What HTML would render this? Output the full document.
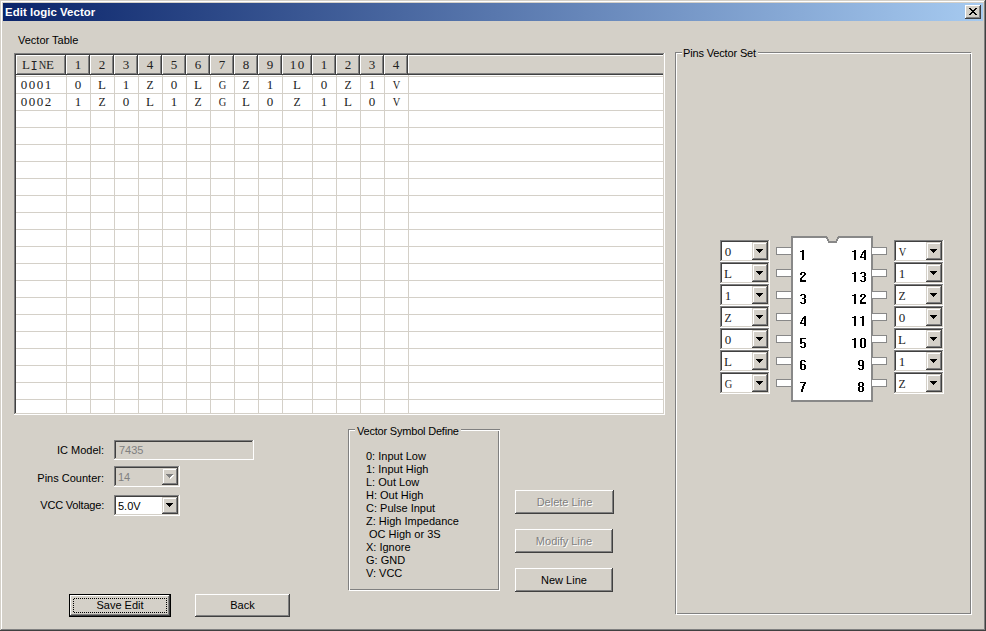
<!DOCTYPE html><html><head><meta charset="utf-8"><style>
*{margin:0;padding:0}
html,body{width:986px;height:631px;overflow:hidden;background:#d4d0c8}
body{position:relative;font-family:"Liberation Sans",sans-serif;font-size:11px;color:#000}
div,span{position:absolute}
span{white-space:pre;line-height:13px}
.s{padding-top:1px}
.s{font-size:11px}
.m{font-family:"Liberation Mono",monospace;font-size:12.6px;line-height:15px;letter-spacing:0.4px;color:#222}
.b{font-weight:bold}
.g{color:#808080}
.cs{font-family:"Liberation Serif",serif;font-size:13px;line-height:14px;width:8px;text-align:center;color:#222}
.ic{font-weight:bold;font-size:14px;line-height:16px}
</style></head><body>
<div style="left:0px;top:0px;width:986px;height:1px;background:#d4d0c8;"></div>
<div style="left:0px;top:0px;width:1px;height:631px;background:#d4d0c8;"></div>
<div style="left:0px;top:630px;width:986px;height:1px;background:#404040;"></div>
<div style="left:985px;top:0px;width:1px;height:631px;background:#404040;"></div>
<div style="left:1px;top:1px;width:984px;height:1px;background:#fff;"></div>
<div style="left:1px;top:1px;width:1px;height:629px;background:#fff;"></div>
<div style="left:1px;top:629px;width:984px;height:1px;background:#808080;"></div>
<div style="left:984px;top:1px;width:1px;height:629px;background:#808080;"></div>
<div style="left:3px;top:3px;width:980px;height:18px;background:linear-gradient(to right,#0a246a,#a6caf0);"></div>
<span class="b" style="left:5px;top:6px;color:#fff;font-size:11.4px;letter-spacing:0.06px">Edit logic Vector</span>
<div style="left:965px;top:5px;width:16px;height:14px;background:#d4d0c8;"></div>
<div style="left:965px;top:5px;width:16px;height:1px;background:#fff;"></div>
<div style="left:965px;top:5px;width:1px;height:14px;background:#fff;"></div>
<div style="left:965px;top:18px;width:16px;height:1px;background:#404040;"></div>
<div style="left:980px;top:5px;width:1px;height:14px;background:#404040;"></div>
<div style="left:966px;top:17px;width:14px;height:1px;background:#808080;"></div>
<div style="left:979px;top:6px;width:1px;height:12px;background:#808080;"></div>
<div style="left:969px;top:8px;width:1px;height:1px;background:#000;"></div>
<div style="left:970px;top:8px;width:1px;height:1px;background:#000;"></div>
<div style="left:975px;top:8px;width:1px;height:1px;background:#000;"></div>
<div style="left:976px;top:8px;width:1px;height:1px;background:#000;"></div>
<div style="left:970px;top:9px;width:1px;height:1px;background:#000;"></div>
<div style="left:971px;top:9px;width:1px;height:1px;background:#000;"></div>
<div style="left:974px;top:9px;width:1px;height:1px;background:#000;"></div>
<div style="left:975px;top:9px;width:1px;height:1px;background:#000;"></div>
<div style="left:971px;top:10px;width:1px;height:1px;background:#000;"></div>
<div style="left:972px;top:10px;width:1px;height:1px;background:#000;"></div>
<div style="left:973px;top:10px;width:1px;height:1px;background:#000;"></div>
<div style="left:974px;top:10px;width:1px;height:1px;background:#000;"></div>
<div style="left:972px;top:11px;width:1px;height:1px;background:#000;"></div>
<div style="left:973px;top:11px;width:1px;height:1px;background:#000;"></div>
<div style="left:971px;top:12px;width:1px;height:1px;background:#000;"></div>
<div style="left:972px;top:12px;width:1px;height:1px;background:#000;"></div>
<div style="left:973px;top:12px;width:1px;height:1px;background:#000;"></div>
<div style="left:974px;top:12px;width:1px;height:1px;background:#000;"></div>
<div style="left:970px;top:13px;width:1px;height:1px;background:#000;"></div>
<div style="left:971px;top:13px;width:1px;height:1px;background:#000;"></div>
<div style="left:974px;top:13px;width:1px;height:1px;background:#000;"></div>
<div style="left:975px;top:13px;width:1px;height:1px;background:#000;"></div>
<div style="left:969px;top:14px;width:1px;height:1px;background:#000;"></div>
<div style="left:970px;top:14px;width:1px;height:1px;background:#000;"></div>
<div style="left:975px;top:14px;width:1px;height:1px;background:#000;"></div>
<div style="left:976px;top:14px;width:1px;height:1px;background:#000;"></div>
<span class="s" style="left:18px;top:33px;">Vector Table</span>
<div style="left:14px;top:53px;width:651px;height:362px;background:#fff;"></div>
<div style="left:14px;top:53px;width:651px;height:1px;background:#808080;"></div>
<div style="left:14px;top:53px;width:1px;height:362px;background:#808080;"></div>
<div style="left:14px;top:414px;width:651px;height:1px;background:#fff;"></div>
<div style="left:664px;top:53px;width:1px;height:362px;background:#fff;"></div>
<div style="left:15px;top:54px;width:649px;height:1px;background:#404040;"></div>
<div style="left:15px;top:54px;width:1px;height:360px;background:#404040;"></div>
<div style="left:15px;top:413px;width:649px;height:1px;background:#d4d0c8;"></div>
<div style="left:663px;top:54px;width:1px;height:360px;background:#d4d0c8;"></div>
<div style="left:16px;top:76px;width:647px;height:1px;background:#d4d0c8;"></div>
<div style="left:16px;top:93px;width:647px;height:1px;background:#d4d0c8;"></div>
<div style="left:16px;top:110px;width:647px;height:1px;background:#d4d0c8;"></div>
<div style="left:16px;top:127px;width:647px;height:1px;background:#d4d0c8;"></div>
<div style="left:16px;top:144px;width:647px;height:1px;background:#d4d0c8;"></div>
<div style="left:16px;top:161px;width:647px;height:1px;background:#d4d0c8;"></div>
<div style="left:16px;top:178px;width:647px;height:1px;background:#d4d0c8;"></div>
<div style="left:16px;top:195px;width:647px;height:1px;background:#d4d0c8;"></div>
<div style="left:16px;top:212px;width:647px;height:1px;background:#d4d0c8;"></div>
<div style="left:16px;top:229px;width:647px;height:1px;background:#d4d0c8;"></div>
<div style="left:16px;top:246px;width:647px;height:1px;background:#d4d0c8;"></div>
<div style="left:16px;top:263px;width:647px;height:1px;background:#d4d0c8;"></div>
<div style="left:16px;top:280px;width:647px;height:1px;background:#d4d0c8;"></div>
<div style="left:16px;top:297px;width:647px;height:1px;background:#d4d0c8;"></div>
<div style="left:16px;top:314px;width:647px;height:1px;background:#d4d0c8;"></div>
<div style="left:16px;top:331px;width:647px;height:1px;background:#d4d0c8;"></div>
<div style="left:16px;top:348px;width:647px;height:1px;background:#d4d0c8;"></div>
<div style="left:16px;top:365px;width:647px;height:1px;background:#d4d0c8;"></div>
<div style="left:16px;top:382px;width:647px;height:1px;background:#d4d0c8;"></div>
<div style="left:16px;top:399px;width:647px;height:1px;background:#d4d0c8;"></div>
<div style="left:66px;top:75px;width:1px;height:338px;background:#d4d0c8;"></div>
<div style="left:90px;top:75px;width:1px;height:338px;background:#d4d0c8;"></div>
<div style="left:114px;top:75px;width:1px;height:338px;background:#d4d0c8;"></div>
<div style="left:138px;top:75px;width:1px;height:338px;background:#d4d0c8;"></div>
<div style="left:162px;top:75px;width:1px;height:338px;background:#d4d0c8;"></div>
<div style="left:186px;top:75px;width:1px;height:338px;background:#d4d0c8;"></div>
<div style="left:210px;top:75px;width:1px;height:338px;background:#d4d0c8;"></div>
<div style="left:234px;top:75px;width:1px;height:338px;background:#d4d0c8;"></div>
<div style="left:258px;top:75px;width:1px;height:338px;background:#d4d0c8;"></div>
<div style="left:282px;top:75px;width:1px;height:338px;background:#d4d0c8;"></div>
<div style="left:312px;top:75px;width:1px;height:338px;background:#d4d0c8;"></div>
<div style="left:336px;top:75px;width:1px;height:338px;background:#d4d0c8;"></div>
<div style="left:360px;top:75px;width:1px;height:338px;background:#d4d0c8;"></div>
<div style="left:384px;top:75px;width:1px;height:338px;background:#d4d0c8;"></div>
<div style="left:408px;top:75px;width:1px;height:338px;background:#d4d0c8;"></div>
<div style="left:16px;top:55px;width:50px;height:20px;background:#d4d0c8;"></div>
<div style="left:16px;top:55px;width:50px;height:1px;background:#fff;"></div>
<div style="left:16px;top:55px;width:1px;height:20px;background:#fff;"></div>
<div style="left:16px;top:74px;width:50px;height:1px;background:#404040;"></div>
<div style="left:65px;top:55px;width:1px;height:20px;background:#404040;"></div>
<div style="left:17px;top:73px;width:48px;height:1px;background:#808080;"></div>
<div style="left:64px;top:56px;width:1px;height:18px;background:#808080;"></div>
<span class="cs" style="left:22px;top:58px;">L</span>
<span class="cs" style="left:30px;top:60px;font-family:'Liberation Mono',monospace;font-size:12px;">I</span>
<span class="cs" style="left:38px;top:58px;transform:scaleX(0.8);">N</span>
<span class="cs" style="left:46px;top:58px;">E</span>
<div style="left:66px;top:55px;width:24px;height:20px;background:#d4d0c8;"></div>
<div style="left:66px;top:55px;width:24px;height:1px;background:#fff;"></div>
<div style="left:66px;top:55px;width:1px;height:20px;background:#fff;"></div>
<div style="left:66px;top:74px;width:24px;height:1px;background:#404040;"></div>
<div style="left:89px;top:55px;width:1px;height:20px;background:#404040;"></div>
<div style="left:67px;top:73px;width:22px;height:1px;background:#808080;"></div>
<div style="left:88px;top:56px;width:1px;height:18px;background:#808080;"></div>
<span class="cs" style="left:74px;top:58px;">1</span>
<div style="left:90px;top:55px;width:24px;height:20px;background:#d4d0c8;"></div>
<div style="left:90px;top:55px;width:24px;height:1px;background:#fff;"></div>
<div style="left:90px;top:55px;width:1px;height:20px;background:#fff;"></div>
<div style="left:90px;top:74px;width:24px;height:1px;background:#404040;"></div>
<div style="left:113px;top:55px;width:1px;height:20px;background:#404040;"></div>
<div style="left:91px;top:73px;width:22px;height:1px;background:#808080;"></div>
<div style="left:112px;top:56px;width:1px;height:18px;background:#808080;"></div>
<span class="cs" style="left:98px;top:58px;">2</span>
<div style="left:114px;top:55px;width:24px;height:20px;background:#d4d0c8;"></div>
<div style="left:114px;top:55px;width:24px;height:1px;background:#fff;"></div>
<div style="left:114px;top:55px;width:1px;height:20px;background:#fff;"></div>
<div style="left:114px;top:74px;width:24px;height:1px;background:#404040;"></div>
<div style="left:137px;top:55px;width:1px;height:20px;background:#404040;"></div>
<div style="left:115px;top:73px;width:22px;height:1px;background:#808080;"></div>
<div style="left:136px;top:56px;width:1px;height:18px;background:#808080;"></div>
<span class="cs" style="left:122px;top:58px;">3</span>
<div style="left:138px;top:55px;width:24px;height:20px;background:#d4d0c8;"></div>
<div style="left:138px;top:55px;width:24px;height:1px;background:#fff;"></div>
<div style="left:138px;top:55px;width:1px;height:20px;background:#fff;"></div>
<div style="left:138px;top:74px;width:24px;height:1px;background:#404040;"></div>
<div style="left:161px;top:55px;width:1px;height:20px;background:#404040;"></div>
<div style="left:139px;top:73px;width:22px;height:1px;background:#808080;"></div>
<div style="left:160px;top:56px;width:1px;height:18px;background:#808080;"></div>
<span class="cs" style="left:146px;top:58px;">4</span>
<div style="left:162px;top:55px;width:24px;height:20px;background:#d4d0c8;"></div>
<div style="left:162px;top:55px;width:24px;height:1px;background:#fff;"></div>
<div style="left:162px;top:55px;width:1px;height:20px;background:#fff;"></div>
<div style="left:162px;top:74px;width:24px;height:1px;background:#404040;"></div>
<div style="left:185px;top:55px;width:1px;height:20px;background:#404040;"></div>
<div style="left:163px;top:73px;width:22px;height:1px;background:#808080;"></div>
<div style="left:184px;top:56px;width:1px;height:18px;background:#808080;"></div>
<span class="cs" style="left:170px;top:58px;">5</span>
<div style="left:186px;top:55px;width:24px;height:20px;background:#d4d0c8;"></div>
<div style="left:186px;top:55px;width:24px;height:1px;background:#fff;"></div>
<div style="left:186px;top:55px;width:1px;height:20px;background:#fff;"></div>
<div style="left:186px;top:74px;width:24px;height:1px;background:#404040;"></div>
<div style="left:209px;top:55px;width:1px;height:20px;background:#404040;"></div>
<div style="left:187px;top:73px;width:22px;height:1px;background:#808080;"></div>
<div style="left:208px;top:56px;width:1px;height:18px;background:#808080;"></div>
<span class="cs" style="left:194px;top:58px;">6</span>
<div style="left:210px;top:55px;width:24px;height:20px;background:#d4d0c8;"></div>
<div style="left:210px;top:55px;width:24px;height:1px;background:#fff;"></div>
<div style="left:210px;top:55px;width:1px;height:20px;background:#fff;"></div>
<div style="left:210px;top:74px;width:24px;height:1px;background:#404040;"></div>
<div style="left:233px;top:55px;width:1px;height:20px;background:#404040;"></div>
<div style="left:211px;top:73px;width:22px;height:1px;background:#808080;"></div>
<div style="left:232px;top:56px;width:1px;height:18px;background:#808080;"></div>
<span class="cs" style="left:218px;top:58px;">7</span>
<div style="left:234px;top:55px;width:24px;height:20px;background:#d4d0c8;"></div>
<div style="left:234px;top:55px;width:24px;height:1px;background:#fff;"></div>
<div style="left:234px;top:55px;width:1px;height:20px;background:#fff;"></div>
<div style="left:234px;top:74px;width:24px;height:1px;background:#404040;"></div>
<div style="left:257px;top:55px;width:1px;height:20px;background:#404040;"></div>
<div style="left:235px;top:73px;width:22px;height:1px;background:#808080;"></div>
<div style="left:256px;top:56px;width:1px;height:18px;background:#808080;"></div>
<span class="cs" style="left:242px;top:58px;">8</span>
<div style="left:258px;top:55px;width:24px;height:20px;background:#d4d0c8;"></div>
<div style="left:258px;top:55px;width:24px;height:1px;background:#fff;"></div>
<div style="left:258px;top:55px;width:1px;height:20px;background:#fff;"></div>
<div style="left:258px;top:74px;width:24px;height:1px;background:#404040;"></div>
<div style="left:281px;top:55px;width:1px;height:20px;background:#404040;"></div>
<div style="left:259px;top:73px;width:22px;height:1px;background:#808080;"></div>
<div style="left:280px;top:56px;width:1px;height:18px;background:#808080;"></div>
<span class="cs" style="left:266px;top:58px;">9</span>
<div style="left:282px;top:55px;width:30px;height:20px;background:#d4d0c8;"></div>
<div style="left:282px;top:55px;width:30px;height:1px;background:#fff;"></div>
<div style="left:282px;top:55px;width:1px;height:20px;background:#fff;"></div>
<div style="left:282px;top:74px;width:30px;height:1px;background:#404040;"></div>
<div style="left:311px;top:55px;width:1px;height:20px;background:#404040;"></div>
<div style="left:283px;top:73px;width:28px;height:1px;background:#808080;"></div>
<div style="left:310px;top:56px;width:1px;height:18px;background:#808080;"></div>
<span class="cs" style="left:289px;top:58px;">1</span>
<span class="cs" style="left:297px;top:58px;">0</span>
<div style="left:312px;top:55px;width:24px;height:20px;background:#d4d0c8;"></div>
<div style="left:312px;top:55px;width:24px;height:1px;background:#fff;"></div>
<div style="left:312px;top:55px;width:1px;height:20px;background:#fff;"></div>
<div style="left:312px;top:74px;width:24px;height:1px;background:#404040;"></div>
<div style="left:335px;top:55px;width:1px;height:20px;background:#404040;"></div>
<div style="left:313px;top:73px;width:22px;height:1px;background:#808080;"></div>
<div style="left:334px;top:56px;width:1px;height:18px;background:#808080;"></div>
<span class="cs" style="left:320px;top:58px;">1</span>
<div style="left:336px;top:55px;width:24px;height:20px;background:#d4d0c8;"></div>
<div style="left:336px;top:55px;width:24px;height:1px;background:#fff;"></div>
<div style="left:336px;top:55px;width:1px;height:20px;background:#fff;"></div>
<div style="left:336px;top:74px;width:24px;height:1px;background:#404040;"></div>
<div style="left:359px;top:55px;width:1px;height:20px;background:#404040;"></div>
<div style="left:337px;top:73px;width:22px;height:1px;background:#808080;"></div>
<div style="left:358px;top:56px;width:1px;height:18px;background:#808080;"></div>
<span class="cs" style="left:344px;top:58px;">2</span>
<div style="left:360px;top:55px;width:24px;height:20px;background:#d4d0c8;"></div>
<div style="left:360px;top:55px;width:24px;height:1px;background:#fff;"></div>
<div style="left:360px;top:55px;width:1px;height:20px;background:#fff;"></div>
<div style="left:360px;top:74px;width:24px;height:1px;background:#404040;"></div>
<div style="left:383px;top:55px;width:1px;height:20px;background:#404040;"></div>
<div style="left:361px;top:73px;width:22px;height:1px;background:#808080;"></div>
<div style="left:382px;top:56px;width:1px;height:18px;background:#808080;"></div>
<span class="cs" style="left:368px;top:58px;">3</span>
<div style="left:384px;top:55px;width:24px;height:20px;background:#d4d0c8;"></div>
<div style="left:384px;top:55px;width:24px;height:1px;background:#fff;"></div>
<div style="left:384px;top:55px;width:1px;height:20px;background:#fff;"></div>
<div style="left:384px;top:74px;width:24px;height:1px;background:#404040;"></div>
<div style="left:407px;top:55px;width:1px;height:20px;background:#404040;"></div>
<div style="left:385px;top:73px;width:22px;height:1px;background:#808080;"></div>
<div style="left:406px;top:56px;width:1px;height:18px;background:#808080;"></div>
<span class="cs" style="left:392px;top:58px;">4</span>
<div style="left:408px;top:55px;width:255px;height:20px;background:#d4d0c8;"></div>
<div style="left:408px;top:55px;width:255px;height:1px;background:#fff;"></div>
<div style="left:408px;top:55px;width:1px;height:20px;background:#fff;"></div>
<div style="left:408px;top:73px;width:255px;height:1px;background:#808080;"></div>
<div style="left:408px;top:74px;width:255px;height:1px;background:#404040;"></div>
<span class="cs" style="left:20px;top:78px;">0</span>
<span class="cs" style="left:28px;top:78px;">0</span>
<span class="cs" style="left:36px;top:78px;">0</span>
<span class="cs" style="left:44px;top:78px;">1</span>
<span class="cs" style="left:74px;top:78px;">0</span>
<span class="cs" style="left:98px;top:78px;">L</span>
<span class="cs" style="left:122px;top:78px;">1</span>
<span class="cs" style="left:146px;top:78px;transform:scaleX(0.9);">Z</span>
<span class="cs" style="left:170px;top:78px;">0</span>
<span class="cs" style="left:194px;top:78px;">L</span>
<span class="cs" style="left:218px;top:78px;transform:scaleX(0.8);">G</span>
<span class="cs" style="left:242px;top:78px;transform:scaleX(0.9);">Z</span>
<span class="cs" style="left:266px;top:78px;">1</span>
<span class="cs" style="left:293px;top:78px;">L</span>
<span class="cs" style="left:320px;top:78px;">0</span>
<span class="cs" style="left:344px;top:78px;transform:scaleX(0.9);">Z</span>
<span class="cs" style="left:368px;top:78px;">1</span>
<span class="cs" style="left:392px;top:78px;transform:scaleX(0.8);">V</span>
<span class="cs" style="left:20px;top:95px;">0</span>
<span class="cs" style="left:28px;top:95px;">0</span>
<span class="cs" style="left:36px;top:95px;">0</span>
<span class="cs" style="left:44px;top:95px;">2</span>
<span class="cs" style="left:74px;top:95px;">1</span>
<span class="cs" style="left:98px;top:95px;transform:scaleX(0.9);">Z</span>
<span class="cs" style="left:122px;top:95px;">0</span>
<span class="cs" style="left:146px;top:95px;">L</span>
<span class="cs" style="left:170px;top:95px;">1</span>
<span class="cs" style="left:194px;top:95px;transform:scaleX(0.9);">Z</span>
<span class="cs" style="left:218px;top:95px;transform:scaleX(0.8);">G</span>
<span class="cs" style="left:242px;top:95px;">L</span>
<span class="cs" style="left:266px;top:95px;">0</span>
<span class="cs" style="left:293px;top:95px;transform:scaleX(0.9);">Z</span>
<span class="cs" style="left:320px;top:95px;">1</span>
<span class="cs" style="left:344px;top:95px;">L</span>
<span class="cs" style="left:368px;top:95px;">0</span>
<span class="cs" style="left:392px;top:95px;transform:scaleX(0.8);">V</span>
<span class="s" style="left:0px;top:443px;width:104px;text-align:right">IC Model:</span>
<span class="s" style="left:0px;top:471px;width:104px;text-align:right">Pins Counter:</span>
<span class="s" style="left:0px;top:498px;width:104px;text-align:right;letter-spacing:-0.2px">VCC Voltage:</span>
<div style="left:114px;top:440px;width:140px;height:20px;background:#d4d0c8;"></div>
<div style="left:114px;top:440px;width:140px;height:1px;background:#808080;"></div>
<div style="left:114px;top:440px;width:1px;height:20px;background:#808080;"></div>
<div style="left:114px;top:459px;width:140px;height:1px;background:#fff;"></div>
<div style="left:253px;top:440px;width:1px;height:20px;background:#fff;"></div>
<div style="left:115px;top:441px;width:138px;height:1px;background:#404040;"></div>
<div style="left:115px;top:441px;width:1px;height:18px;background:#404040;"></div>
<div style="left:115px;top:458px;width:138px;height:1px;background:#d4d0c8;"></div>
<div style="left:252px;top:441px;width:1px;height:18px;background:#d4d0c8;"></div>
<span class="s g" style="left:119px;top:443px;">7435</span>
<div style="left:114px;top:466px;width:66px;height:21px;background:#d4d0c8;"></div>
<div style="left:114px;top:466px;width:66px;height:1px;background:#808080;"></div>
<div style="left:114px;top:466px;width:1px;height:21px;background:#808080;"></div>
<div style="left:114px;top:486px;width:66px;height:1px;background:#fff;"></div>
<div style="left:179px;top:466px;width:1px;height:21px;background:#fff;"></div>
<div style="left:115px;top:467px;width:64px;height:1px;background:#404040;"></div>
<div style="left:115px;top:467px;width:1px;height:19px;background:#404040;"></div>
<div style="left:115px;top:485px;width:64px;height:1px;background:#d4d0c8;"></div>
<div style="left:178px;top:467px;width:1px;height:19px;background:#d4d0c8;"></div>
<div style="left:162px;top:468px;width:16px;height:17px;background:#d4d0c8;"></div>
<div style="left:162px;top:468px;width:16px;height:1px;background:#d4d0c8;"></div>
<div style="left:162px;top:468px;width:1px;height:17px;background:#d4d0c8;"></div>
<div style="left:162px;top:484px;width:16px;height:1px;background:#404040;"></div>
<div style="left:177px;top:468px;width:1px;height:17px;background:#404040;"></div>
<div style="left:163px;top:469px;width:14px;height:1px;background:#fff;"></div>
<div style="left:163px;top:469px;width:1px;height:15px;background:#fff;"></div>
<div style="left:163px;top:483px;width:14px;height:1px;background:#808080;"></div>
<div style="left:176px;top:469px;width:1px;height:15px;background:#808080;"></div>
<div style="left:167px;top:475px;width:7px;height:1px;background:#fff;"></div>
<div style="left:168px;top:476px;width:5px;height:1px;background:#fff;"></div>
<div style="left:169px;top:477px;width:3px;height:1px;background:#fff;"></div>
<div style="left:170px;top:478px;width:1px;height:1px;background:#fff;"></div>
<div style="left:166px;top:474px;width:7px;height:1px;background:#808080;"></div>
<div style="left:167px;top:475px;width:5px;height:1px;background:#808080;"></div>
<div style="left:168px;top:476px;width:3px;height:1px;background:#808080;"></div>
<div style="left:169px;top:477px;width:1px;height:1px;background:#808080;"></div>
<span class="s g" style="left:118px;top:470px;">14</span>
<div style="left:114px;top:495px;width:66px;height:21px;background:#fff;"></div>
<div style="left:114px;top:495px;width:66px;height:1px;background:#808080;"></div>
<div style="left:114px;top:495px;width:1px;height:21px;background:#808080;"></div>
<div style="left:114px;top:515px;width:66px;height:1px;background:#fff;"></div>
<div style="left:179px;top:495px;width:1px;height:21px;background:#fff;"></div>
<div style="left:115px;top:496px;width:64px;height:1px;background:#404040;"></div>
<div style="left:115px;top:496px;width:1px;height:19px;background:#404040;"></div>
<div style="left:115px;top:514px;width:64px;height:1px;background:#d4d0c8;"></div>
<div style="left:178px;top:496px;width:1px;height:19px;background:#d4d0c8;"></div>
<div style="left:162px;top:497px;width:16px;height:17px;background:#d4d0c8;"></div>
<div style="left:162px;top:497px;width:16px;height:1px;background:#d4d0c8;"></div>
<div style="left:162px;top:497px;width:1px;height:17px;background:#d4d0c8;"></div>
<div style="left:162px;top:513px;width:16px;height:1px;background:#404040;"></div>
<div style="left:177px;top:497px;width:1px;height:17px;background:#404040;"></div>
<div style="left:163px;top:498px;width:14px;height:1px;background:#fff;"></div>
<div style="left:163px;top:498px;width:1px;height:15px;background:#fff;"></div>
<div style="left:163px;top:512px;width:14px;height:1px;background:#808080;"></div>
<div style="left:176px;top:498px;width:1px;height:15px;background:#808080;"></div>
<div style="left:166px;top:503px;width:7px;height:1px;background:#000;"></div>
<div style="left:167px;top:504px;width:5px;height:1px;background:#000;"></div>
<div style="left:168px;top:505px;width:3px;height:1px;background:#000;"></div>
<div style="left:169px;top:506px;width:1px;height:1px;background:#000;"></div>
<span class="s" style="left:118px;top:499px;">5.0V</span>
<div style="left:69px;top:594px;width:102px;height:23px;background:#000;"></div>
<div style="left:70px;top:595px;width:100px;height:21px;background:#d4d0c8;"></div>
<div style="left:70px;top:595px;width:100px;height:1px;background:#fff;"></div>
<div style="left:70px;top:595px;width:1px;height:21px;background:#fff;"></div>
<div style="left:70px;top:615px;width:100px;height:1px;background:#404040;"></div>
<div style="left:169px;top:595px;width:1px;height:21px;background:#404040;"></div>
<div style="left:71px;top:614px;width:98px;height:1px;background:#808080;"></div>
<div style="left:168px;top:596px;width:1px;height:19px;background:#808080;"></div>
<span class="s" style="left:69px;top:598px;width:102px;text-align:center">Save Edit</span>
<div style="left:195px;top:594px;width:95px;height:23px;background:#d4d0c8;"></div>
<div style="left:195px;top:594px;width:95px;height:1px;background:#fff;"></div>
<div style="left:195px;top:594px;width:1px;height:23px;background:#fff;"></div>
<div style="left:195px;top:616px;width:95px;height:1px;background:#404040;"></div>
<div style="left:289px;top:594px;width:1px;height:23px;background:#404040;"></div>
<div style="left:196px;top:615px;width:93px;height:1px;background:#808080;"></div>
<div style="left:288px;top:595px;width:1px;height:21px;background:#808080;"></div>
<span class="s" style="left:195px;top:598px;width:95px;text-align:center">Back</span>
<div style="left:348px;top:429px;width:151px;height:1px;background:#808080;"></div>
<div style="left:348px;top:429px;width:1px;height:161px;background:#808080;"></div>
<div style="left:348px;top:589px;width:151px;height:1px;background:#808080;"></div>
<div style="left:498px;top:429px;width:1px;height:161px;background:#808080;"></div>
<div style="left:349px;top:430px;width:151px;height:1px;background:#fff;"></div>
<div style="left:349px;top:430px;width:1px;height:161px;background:#fff;"></div>
<div style="left:349px;top:590px;width:151px;height:1px;background:#fff;"></div>
<div style="left:499px;top:430px;width:1px;height:161px;background:#fff;"></div>
<div style="left:348px;top:429px;width:152px;height:1px;background:#808080;"></div>
<div style="left:355px;top:422px;width:106px;height:14px;background:#d4d0c8;"></div>
<span class="s" style="left:357px;top:424px;letter-spacing:-0.2px">Vector Symbol Define</span>
<span class="s" style="left:366px;top:449px;">0: Input Low</span>
<span class="s" style="left:366px;top:462px;">1: Input High</span>
<span class="s" style="left:366px;top:475px;">L: Out Low</span>
<span class="s" style="left:366px;top:488px;">H: Out High</span>
<span class="s" style="left:366px;top:501px;">C: Pulse Input</span>
<span class="s" style="left:366px;top:514px;">Z: High Impedance</span>
<span class="s" style="left:366px;top:527px;"> OC High or 3S</span>
<span class="s" style="left:366px;top:540px;">X: Ignore</span>
<span class="s" style="left:366px;top:553px;">G: GND</span>
<span class="s" style="left:366px;top:566px;">V: VCC</span>
<div style="left:515px;top:490px;width:99px;height:24px;background:#d4d0c8;"></div>
<div style="left:515px;top:490px;width:99px;height:1px;background:#fff;"></div>
<div style="left:515px;top:490px;width:1px;height:24px;background:#fff;"></div>
<div style="left:515px;top:513px;width:99px;height:1px;background:#404040;"></div>
<div style="left:613px;top:490px;width:1px;height:24px;background:#404040;"></div>
<div style="left:516px;top:512px;width:97px;height:1px;background:#808080;"></div>
<div style="left:612px;top:491px;width:1px;height:22px;background:#808080;"></div>
<span class="s" style="left:516px;top:496px;width:99px;text-align:center;color:#fff">Delete Line</span>
<span class="s" style="left:515px;top:495px;width:99px;text-align:center;color:#808080">Delete Line</span>
<div style="left:515px;top:529px;width:98px;height:24px;background:#d4d0c8;"></div>
<div style="left:515px;top:529px;width:98px;height:1px;background:#fff;"></div>
<div style="left:515px;top:529px;width:1px;height:24px;background:#fff;"></div>
<div style="left:515px;top:552px;width:98px;height:1px;background:#404040;"></div>
<div style="left:612px;top:529px;width:1px;height:24px;background:#404040;"></div>
<div style="left:516px;top:551px;width:96px;height:1px;background:#808080;"></div>
<div style="left:611px;top:530px;width:1px;height:22px;background:#808080;"></div>
<span class="s" style="left:516px;top:535px;width:98px;text-align:center;color:#fff">Modify Line</span>
<span class="s" style="left:515px;top:534px;width:98px;text-align:center;color:#808080">Modify Line</span>
<div style="left:515px;top:568px;width:98px;height:24px;background:#d4d0c8;"></div>
<div style="left:515px;top:568px;width:98px;height:1px;background:#fff;"></div>
<div style="left:515px;top:568px;width:1px;height:24px;background:#fff;"></div>
<div style="left:515px;top:591px;width:98px;height:1px;background:#404040;"></div>
<div style="left:612px;top:568px;width:1px;height:24px;background:#404040;"></div>
<div style="left:516px;top:590px;width:96px;height:1px;background:#808080;"></div>
<div style="left:611px;top:569px;width:1px;height:22px;background:#808080;"></div>
<span class="s" style="left:515px;top:573px;width:98px;text-align:center">New Line</span>
<div style="left:675px;top:52px;width:296px;height:1px;background:#808080;"></div>
<div style="left:675px;top:52px;width:1px;height:562px;background:#808080;"></div>
<div style="left:675px;top:613px;width:296px;height:1px;background:#808080;"></div>
<div style="left:970px;top:52px;width:1px;height:562px;background:#808080;"></div>
<div style="left:676px;top:53px;width:296px;height:1px;background:#fff;"></div>
<div style="left:676px;top:53px;width:1px;height:562px;background:#fff;"></div>
<div style="left:676px;top:614px;width:296px;height:1px;background:#fff;"></div>
<div style="left:971px;top:53px;width:1px;height:562px;background:#fff;"></div>
<div style="left:682px;top:44px;width:76px;height:14px;background:#d4d0c8;"></div>
<span class="s" style="left:683px;top:46px;letter-spacing:-0.15px">Pins Vector Set</span>
<div style="left:791px;top:236px;width:82px;height:166px;background:#888;"></div>
<div style="left:793px;top:238px;width:78px;height:162px;background:#fff;"></div>
<div style="left:827px;top:236px;width:11px;height:1px;background:#d4d0c8;"></div>
<div style="left:828px;top:237px;width:9px;height:1px;background:#d4d0c8;"></div>
<div style="left:826px;top:238px;width:13px;height:1px;background:#888;"></div>
<div style="left:828px;top:238px;width:9px;height:1px;background:#d4d0c8;"></div>
<div style="left:827px;top:239px;width:11px;height:2px;background:#888;"></div>
<div style="left:829px;top:239px;width:7px;height:2px;background:#d4d0c8;"></div>
<div style="left:828px;top:241px;width:9px;height:2px;background:#888;"></div>
<div style="left:776px;top:247px;width:16px;height:8px;background:#888;"></div>
<div style="left:777px;top:248px;width:14px;height:6px;background:#fff;"></div>
<div style="left:871px;top:247px;width:16px;height:8px;background:#888;"></div>
<div style="left:872px;top:248px;width:14px;height:6px;background:#fff;"></div>
<div style="left:720px;top:240px;width:50px;height:22px;background:#fff;"></div>
<div style="left:720px;top:240px;width:50px;height:1px;background:#808080;"></div>
<div style="left:720px;top:240px;width:1px;height:22px;background:#808080;"></div>
<div style="left:720px;top:261px;width:50px;height:1px;background:#fff;"></div>
<div style="left:769px;top:240px;width:1px;height:22px;background:#fff;"></div>
<div style="left:721px;top:241px;width:48px;height:1px;background:#404040;"></div>
<div style="left:721px;top:241px;width:1px;height:20px;background:#404040;"></div>
<div style="left:721px;top:260px;width:48px;height:1px;background:#d4d0c8;"></div>
<div style="left:768px;top:241px;width:1px;height:20px;background:#d4d0c8;"></div>
<div style="left:752px;top:242px;width:16px;height:18px;background:#d4d0c8;"></div>
<div style="left:752px;top:242px;width:16px;height:1px;background:#d4d0c8;"></div>
<div style="left:752px;top:242px;width:1px;height:18px;background:#d4d0c8;"></div>
<div style="left:752px;top:259px;width:16px;height:1px;background:#404040;"></div>
<div style="left:767px;top:242px;width:1px;height:18px;background:#404040;"></div>
<div style="left:753px;top:243px;width:14px;height:1px;background:#fff;"></div>
<div style="left:753px;top:243px;width:1px;height:16px;background:#fff;"></div>
<div style="left:753px;top:258px;width:14px;height:1px;background:#808080;"></div>
<div style="left:766px;top:243px;width:1px;height:16px;background:#808080;"></div>
<div style="left:756px;top:249px;width:7px;height:1px;background:#000;"></div>
<div style="left:757px;top:250px;width:5px;height:1px;background:#000;"></div>
<div style="left:758px;top:251px;width:3px;height:1px;background:#000;"></div>
<div style="left:759px;top:252px;width:1px;height:1px;background:#000;"></div>
<span class="cs" style="left:724px;top:245px;">0</span>
<div style="left:894px;top:240px;width:50px;height:22px;background:#fff;"></div>
<div style="left:894px;top:240px;width:50px;height:1px;background:#808080;"></div>
<div style="left:894px;top:240px;width:1px;height:22px;background:#808080;"></div>
<div style="left:894px;top:261px;width:50px;height:1px;background:#fff;"></div>
<div style="left:943px;top:240px;width:1px;height:22px;background:#fff;"></div>
<div style="left:895px;top:241px;width:48px;height:1px;background:#404040;"></div>
<div style="left:895px;top:241px;width:1px;height:20px;background:#404040;"></div>
<div style="left:895px;top:260px;width:48px;height:1px;background:#d4d0c8;"></div>
<div style="left:942px;top:241px;width:1px;height:20px;background:#d4d0c8;"></div>
<div style="left:926px;top:242px;width:16px;height:18px;background:#d4d0c8;"></div>
<div style="left:926px;top:242px;width:16px;height:1px;background:#d4d0c8;"></div>
<div style="left:926px;top:242px;width:1px;height:18px;background:#d4d0c8;"></div>
<div style="left:926px;top:259px;width:16px;height:1px;background:#404040;"></div>
<div style="left:941px;top:242px;width:1px;height:18px;background:#404040;"></div>
<div style="left:927px;top:243px;width:14px;height:1px;background:#fff;"></div>
<div style="left:927px;top:243px;width:1px;height:16px;background:#fff;"></div>
<div style="left:927px;top:258px;width:14px;height:1px;background:#808080;"></div>
<div style="left:940px;top:243px;width:1px;height:16px;background:#808080;"></div>
<div style="left:930px;top:249px;width:7px;height:1px;background:#000;"></div>
<div style="left:931px;top:250px;width:5px;height:1px;background:#000;"></div>
<div style="left:932px;top:251px;width:3px;height:1px;background:#000;"></div>
<div style="left:933px;top:252px;width:1px;height:1px;background:#000;"></div>
<span class="cs" style="left:898px;top:245px;transform:scaleX(0.8);">V</span>
<div style="left:776px;top:269px;width:16px;height:8px;background:#888;"></div>
<div style="left:777px;top:270px;width:14px;height:6px;background:#fff;"></div>
<div style="left:871px;top:269px;width:16px;height:8px;background:#888;"></div>
<div style="left:872px;top:270px;width:14px;height:6px;background:#fff;"></div>
<div style="left:720px;top:262px;width:50px;height:22px;background:#fff;"></div>
<div style="left:720px;top:262px;width:50px;height:1px;background:#808080;"></div>
<div style="left:720px;top:262px;width:1px;height:22px;background:#808080;"></div>
<div style="left:720px;top:283px;width:50px;height:1px;background:#fff;"></div>
<div style="left:769px;top:262px;width:1px;height:22px;background:#fff;"></div>
<div style="left:721px;top:263px;width:48px;height:1px;background:#404040;"></div>
<div style="left:721px;top:263px;width:1px;height:20px;background:#404040;"></div>
<div style="left:721px;top:282px;width:48px;height:1px;background:#d4d0c8;"></div>
<div style="left:768px;top:263px;width:1px;height:20px;background:#d4d0c8;"></div>
<div style="left:752px;top:264px;width:16px;height:18px;background:#d4d0c8;"></div>
<div style="left:752px;top:264px;width:16px;height:1px;background:#d4d0c8;"></div>
<div style="left:752px;top:264px;width:1px;height:18px;background:#d4d0c8;"></div>
<div style="left:752px;top:281px;width:16px;height:1px;background:#404040;"></div>
<div style="left:767px;top:264px;width:1px;height:18px;background:#404040;"></div>
<div style="left:753px;top:265px;width:14px;height:1px;background:#fff;"></div>
<div style="left:753px;top:265px;width:1px;height:16px;background:#fff;"></div>
<div style="left:753px;top:280px;width:14px;height:1px;background:#808080;"></div>
<div style="left:766px;top:265px;width:1px;height:16px;background:#808080;"></div>
<div style="left:756px;top:271px;width:7px;height:1px;background:#000;"></div>
<div style="left:757px;top:272px;width:5px;height:1px;background:#000;"></div>
<div style="left:758px;top:273px;width:3px;height:1px;background:#000;"></div>
<div style="left:759px;top:274px;width:1px;height:1px;background:#000;"></div>
<span class="cs" style="left:724px;top:267px;">L</span>
<div style="left:894px;top:262px;width:50px;height:22px;background:#fff;"></div>
<div style="left:894px;top:262px;width:50px;height:1px;background:#808080;"></div>
<div style="left:894px;top:262px;width:1px;height:22px;background:#808080;"></div>
<div style="left:894px;top:283px;width:50px;height:1px;background:#fff;"></div>
<div style="left:943px;top:262px;width:1px;height:22px;background:#fff;"></div>
<div style="left:895px;top:263px;width:48px;height:1px;background:#404040;"></div>
<div style="left:895px;top:263px;width:1px;height:20px;background:#404040;"></div>
<div style="left:895px;top:282px;width:48px;height:1px;background:#d4d0c8;"></div>
<div style="left:942px;top:263px;width:1px;height:20px;background:#d4d0c8;"></div>
<div style="left:926px;top:264px;width:16px;height:18px;background:#d4d0c8;"></div>
<div style="left:926px;top:264px;width:16px;height:1px;background:#d4d0c8;"></div>
<div style="left:926px;top:264px;width:1px;height:18px;background:#d4d0c8;"></div>
<div style="left:926px;top:281px;width:16px;height:1px;background:#404040;"></div>
<div style="left:941px;top:264px;width:1px;height:18px;background:#404040;"></div>
<div style="left:927px;top:265px;width:14px;height:1px;background:#fff;"></div>
<div style="left:927px;top:265px;width:1px;height:16px;background:#fff;"></div>
<div style="left:927px;top:280px;width:14px;height:1px;background:#808080;"></div>
<div style="left:940px;top:265px;width:1px;height:16px;background:#808080;"></div>
<div style="left:930px;top:271px;width:7px;height:1px;background:#000;"></div>
<div style="left:931px;top:272px;width:5px;height:1px;background:#000;"></div>
<div style="left:932px;top:273px;width:3px;height:1px;background:#000;"></div>
<div style="left:933px;top:274px;width:1px;height:1px;background:#000;"></div>
<span class="cs" style="left:898px;top:267px;">1</span>
<div style="left:776px;top:291px;width:16px;height:8px;background:#888;"></div>
<div style="left:777px;top:292px;width:14px;height:6px;background:#fff;"></div>
<div style="left:871px;top:291px;width:16px;height:8px;background:#888;"></div>
<div style="left:872px;top:292px;width:14px;height:6px;background:#fff;"></div>
<div style="left:720px;top:284px;width:50px;height:22px;background:#fff;"></div>
<div style="left:720px;top:284px;width:50px;height:1px;background:#808080;"></div>
<div style="left:720px;top:284px;width:1px;height:22px;background:#808080;"></div>
<div style="left:720px;top:305px;width:50px;height:1px;background:#fff;"></div>
<div style="left:769px;top:284px;width:1px;height:22px;background:#fff;"></div>
<div style="left:721px;top:285px;width:48px;height:1px;background:#404040;"></div>
<div style="left:721px;top:285px;width:1px;height:20px;background:#404040;"></div>
<div style="left:721px;top:304px;width:48px;height:1px;background:#d4d0c8;"></div>
<div style="left:768px;top:285px;width:1px;height:20px;background:#d4d0c8;"></div>
<div style="left:752px;top:286px;width:16px;height:18px;background:#d4d0c8;"></div>
<div style="left:752px;top:286px;width:16px;height:1px;background:#d4d0c8;"></div>
<div style="left:752px;top:286px;width:1px;height:18px;background:#d4d0c8;"></div>
<div style="left:752px;top:303px;width:16px;height:1px;background:#404040;"></div>
<div style="left:767px;top:286px;width:1px;height:18px;background:#404040;"></div>
<div style="left:753px;top:287px;width:14px;height:1px;background:#fff;"></div>
<div style="left:753px;top:287px;width:1px;height:16px;background:#fff;"></div>
<div style="left:753px;top:302px;width:14px;height:1px;background:#808080;"></div>
<div style="left:766px;top:287px;width:1px;height:16px;background:#808080;"></div>
<div style="left:756px;top:293px;width:7px;height:1px;background:#000;"></div>
<div style="left:757px;top:294px;width:5px;height:1px;background:#000;"></div>
<div style="left:758px;top:295px;width:3px;height:1px;background:#000;"></div>
<div style="left:759px;top:296px;width:1px;height:1px;background:#000;"></div>
<span class="cs" style="left:724px;top:289px;">1</span>
<div style="left:894px;top:284px;width:50px;height:22px;background:#fff;"></div>
<div style="left:894px;top:284px;width:50px;height:1px;background:#808080;"></div>
<div style="left:894px;top:284px;width:1px;height:22px;background:#808080;"></div>
<div style="left:894px;top:305px;width:50px;height:1px;background:#fff;"></div>
<div style="left:943px;top:284px;width:1px;height:22px;background:#fff;"></div>
<div style="left:895px;top:285px;width:48px;height:1px;background:#404040;"></div>
<div style="left:895px;top:285px;width:1px;height:20px;background:#404040;"></div>
<div style="left:895px;top:304px;width:48px;height:1px;background:#d4d0c8;"></div>
<div style="left:942px;top:285px;width:1px;height:20px;background:#d4d0c8;"></div>
<div style="left:926px;top:286px;width:16px;height:18px;background:#d4d0c8;"></div>
<div style="left:926px;top:286px;width:16px;height:1px;background:#d4d0c8;"></div>
<div style="left:926px;top:286px;width:1px;height:18px;background:#d4d0c8;"></div>
<div style="left:926px;top:303px;width:16px;height:1px;background:#404040;"></div>
<div style="left:941px;top:286px;width:1px;height:18px;background:#404040;"></div>
<div style="left:927px;top:287px;width:14px;height:1px;background:#fff;"></div>
<div style="left:927px;top:287px;width:1px;height:16px;background:#fff;"></div>
<div style="left:927px;top:302px;width:14px;height:1px;background:#808080;"></div>
<div style="left:940px;top:287px;width:1px;height:16px;background:#808080;"></div>
<div style="left:930px;top:293px;width:7px;height:1px;background:#000;"></div>
<div style="left:931px;top:294px;width:5px;height:1px;background:#000;"></div>
<div style="left:932px;top:295px;width:3px;height:1px;background:#000;"></div>
<div style="left:933px;top:296px;width:1px;height:1px;background:#000;"></div>
<span class="cs" style="left:898px;top:289px;transform:scaleX(0.9);">Z</span>
<div style="left:776px;top:313px;width:16px;height:8px;background:#888;"></div>
<div style="left:777px;top:314px;width:14px;height:6px;background:#fff;"></div>
<div style="left:871px;top:313px;width:16px;height:8px;background:#888;"></div>
<div style="left:872px;top:314px;width:14px;height:6px;background:#fff;"></div>
<div style="left:720px;top:306px;width:50px;height:22px;background:#fff;"></div>
<div style="left:720px;top:306px;width:50px;height:1px;background:#808080;"></div>
<div style="left:720px;top:306px;width:1px;height:22px;background:#808080;"></div>
<div style="left:720px;top:327px;width:50px;height:1px;background:#fff;"></div>
<div style="left:769px;top:306px;width:1px;height:22px;background:#fff;"></div>
<div style="left:721px;top:307px;width:48px;height:1px;background:#404040;"></div>
<div style="left:721px;top:307px;width:1px;height:20px;background:#404040;"></div>
<div style="left:721px;top:326px;width:48px;height:1px;background:#d4d0c8;"></div>
<div style="left:768px;top:307px;width:1px;height:20px;background:#d4d0c8;"></div>
<div style="left:752px;top:308px;width:16px;height:18px;background:#d4d0c8;"></div>
<div style="left:752px;top:308px;width:16px;height:1px;background:#d4d0c8;"></div>
<div style="left:752px;top:308px;width:1px;height:18px;background:#d4d0c8;"></div>
<div style="left:752px;top:325px;width:16px;height:1px;background:#404040;"></div>
<div style="left:767px;top:308px;width:1px;height:18px;background:#404040;"></div>
<div style="left:753px;top:309px;width:14px;height:1px;background:#fff;"></div>
<div style="left:753px;top:309px;width:1px;height:16px;background:#fff;"></div>
<div style="left:753px;top:324px;width:14px;height:1px;background:#808080;"></div>
<div style="left:766px;top:309px;width:1px;height:16px;background:#808080;"></div>
<div style="left:756px;top:315px;width:7px;height:1px;background:#000;"></div>
<div style="left:757px;top:316px;width:5px;height:1px;background:#000;"></div>
<div style="left:758px;top:317px;width:3px;height:1px;background:#000;"></div>
<div style="left:759px;top:318px;width:1px;height:1px;background:#000;"></div>
<span class="cs" style="left:724px;top:311px;transform:scaleX(0.9);">Z</span>
<div style="left:894px;top:306px;width:50px;height:22px;background:#fff;"></div>
<div style="left:894px;top:306px;width:50px;height:1px;background:#808080;"></div>
<div style="left:894px;top:306px;width:1px;height:22px;background:#808080;"></div>
<div style="left:894px;top:327px;width:50px;height:1px;background:#fff;"></div>
<div style="left:943px;top:306px;width:1px;height:22px;background:#fff;"></div>
<div style="left:895px;top:307px;width:48px;height:1px;background:#404040;"></div>
<div style="left:895px;top:307px;width:1px;height:20px;background:#404040;"></div>
<div style="left:895px;top:326px;width:48px;height:1px;background:#d4d0c8;"></div>
<div style="left:942px;top:307px;width:1px;height:20px;background:#d4d0c8;"></div>
<div style="left:926px;top:308px;width:16px;height:18px;background:#d4d0c8;"></div>
<div style="left:926px;top:308px;width:16px;height:1px;background:#d4d0c8;"></div>
<div style="left:926px;top:308px;width:1px;height:18px;background:#d4d0c8;"></div>
<div style="left:926px;top:325px;width:16px;height:1px;background:#404040;"></div>
<div style="left:941px;top:308px;width:1px;height:18px;background:#404040;"></div>
<div style="left:927px;top:309px;width:14px;height:1px;background:#fff;"></div>
<div style="left:927px;top:309px;width:1px;height:16px;background:#fff;"></div>
<div style="left:927px;top:324px;width:14px;height:1px;background:#808080;"></div>
<div style="left:940px;top:309px;width:1px;height:16px;background:#808080;"></div>
<div style="left:930px;top:315px;width:7px;height:1px;background:#000;"></div>
<div style="left:931px;top:316px;width:5px;height:1px;background:#000;"></div>
<div style="left:932px;top:317px;width:3px;height:1px;background:#000;"></div>
<div style="left:933px;top:318px;width:1px;height:1px;background:#000;"></div>
<span class="cs" style="left:898px;top:311px;">0</span>
<div style="left:776px;top:335px;width:16px;height:8px;background:#888;"></div>
<div style="left:777px;top:336px;width:14px;height:6px;background:#fff;"></div>
<div style="left:871px;top:335px;width:16px;height:8px;background:#888;"></div>
<div style="left:872px;top:336px;width:14px;height:6px;background:#fff;"></div>
<div style="left:720px;top:328px;width:50px;height:22px;background:#fff;"></div>
<div style="left:720px;top:328px;width:50px;height:1px;background:#808080;"></div>
<div style="left:720px;top:328px;width:1px;height:22px;background:#808080;"></div>
<div style="left:720px;top:349px;width:50px;height:1px;background:#fff;"></div>
<div style="left:769px;top:328px;width:1px;height:22px;background:#fff;"></div>
<div style="left:721px;top:329px;width:48px;height:1px;background:#404040;"></div>
<div style="left:721px;top:329px;width:1px;height:20px;background:#404040;"></div>
<div style="left:721px;top:348px;width:48px;height:1px;background:#d4d0c8;"></div>
<div style="left:768px;top:329px;width:1px;height:20px;background:#d4d0c8;"></div>
<div style="left:752px;top:330px;width:16px;height:18px;background:#d4d0c8;"></div>
<div style="left:752px;top:330px;width:16px;height:1px;background:#d4d0c8;"></div>
<div style="left:752px;top:330px;width:1px;height:18px;background:#d4d0c8;"></div>
<div style="left:752px;top:347px;width:16px;height:1px;background:#404040;"></div>
<div style="left:767px;top:330px;width:1px;height:18px;background:#404040;"></div>
<div style="left:753px;top:331px;width:14px;height:1px;background:#fff;"></div>
<div style="left:753px;top:331px;width:1px;height:16px;background:#fff;"></div>
<div style="left:753px;top:346px;width:14px;height:1px;background:#808080;"></div>
<div style="left:766px;top:331px;width:1px;height:16px;background:#808080;"></div>
<div style="left:756px;top:337px;width:7px;height:1px;background:#000;"></div>
<div style="left:757px;top:338px;width:5px;height:1px;background:#000;"></div>
<div style="left:758px;top:339px;width:3px;height:1px;background:#000;"></div>
<div style="left:759px;top:340px;width:1px;height:1px;background:#000;"></div>
<span class="cs" style="left:724px;top:333px;">0</span>
<div style="left:894px;top:328px;width:50px;height:22px;background:#fff;"></div>
<div style="left:894px;top:328px;width:50px;height:1px;background:#808080;"></div>
<div style="left:894px;top:328px;width:1px;height:22px;background:#808080;"></div>
<div style="left:894px;top:349px;width:50px;height:1px;background:#fff;"></div>
<div style="left:943px;top:328px;width:1px;height:22px;background:#fff;"></div>
<div style="left:895px;top:329px;width:48px;height:1px;background:#404040;"></div>
<div style="left:895px;top:329px;width:1px;height:20px;background:#404040;"></div>
<div style="left:895px;top:348px;width:48px;height:1px;background:#d4d0c8;"></div>
<div style="left:942px;top:329px;width:1px;height:20px;background:#d4d0c8;"></div>
<div style="left:926px;top:330px;width:16px;height:18px;background:#d4d0c8;"></div>
<div style="left:926px;top:330px;width:16px;height:1px;background:#d4d0c8;"></div>
<div style="left:926px;top:330px;width:1px;height:18px;background:#d4d0c8;"></div>
<div style="left:926px;top:347px;width:16px;height:1px;background:#404040;"></div>
<div style="left:941px;top:330px;width:1px;height:18px;background:#404040;"></div>
<div style="left:927px;top:331px;width:14px;height:1px;background:#fff;"></div>
<div style="left:927px;top:331px;width:1px;height:16px;background:#fff;"></div>
<div style="left:927px;top:346px;width:14px;height:1px;background:#808080;"></div>
<div style="left:940px;top:331px;width:1px;height:16px;background:#808080;"></div>
<div style="left:930px;top:337px;width:7px;height:1px;background:#000;"></div>
<div style="left:931px;top:338px;width:5px;height:1px;background:#000;"></div>
<div style="left:932px;top:339px;width:3px;height:1px;background:#000;"></div>
<div style="left:933px;top:340px;width:1px;height:1px;background:#000;"></div>
<span class="cs" style="left:898px;top:333px;">L</span>
<div style="left:776px;top:357px;width:16px;height:8px;background:#888;"></div>
<div style="left:777px;top:358px;width:14px;height:6px;background:#fff;"></div>
<div style="left:871px;top:357px;width:16px;height:8px;background:#888;"></div>
<div style="left:872px;top:358px;width:14px;height:6px;background:#fff;"></div>
<div style="left:720px;top:350px;width:50px;height:22px;background:#fff;"></div>
<div style="left:720px;top:350px;width:50px;height:1px;background:#808080;"></div>
<div style="left:720px;top:350px;width:1px;height:22px;background:#808080;"></div>
<div style="left:720px;top:371px;width:50px;height:1px;background:#fff;"></div>
<div style="left:769px;top:350px;width:1px;height:22px;background:#fff;"></div>
<div style="left:721px;top:351px;width:48px;height:1px;background:#404040;"></div>
<div style="left:721px;top:351px;width:1px;height:20px;background:#404040;"></div>
<div style="left:721px;top:370px;width:48px;height:1px;background:#d4d0c8;"></div>
<div style="left:768px;top:351px;width:1px;height:20px;background:#d4d0c8;"></div>
<div style="left:752px;top:352px;width:16px;height:18px;background:#d4d0c8;"></div>
<div style="left:752px;top:352px;width:16px;height:1px;background:#d4d0c8;"></div>
<div style="left:752px;top:352px;width:1px;height:18px;background:#d4d0c8;"></div>
<div style="left:752px;top:369px;width:16px;height:1px;background:#404040;"></div>
<div style="left:767px;top:352px;width:1px;height:18px;background:#404040;"></div>
<div style="left:753px;top:353px;width:14px;height:1px;background:#fff;"></div>
<div style="left:753px;top:353px;width:1px;height:16px;background:#fff;"></div>
<div style="left:753px;top:368px;width:14px;height:1px;background:#808080;"></div>
<div style="left:766px;top:353px;width:1px;height:16px;background:#808080;"></div>
<div style="left:756px;top:359px;width:7px;height:1px;background:#000;"></div>
<div style="left:757px;top:360px;width:5px;height:1px;background:#000;"></div>
<div style="left:758px;top:361px;width:3px;height:1px;background:#000;"></div>
<div style="left:759px;top:362px;width:1px;height:1px;background:#000;"></div>
<span class="cs" style="left:724px;top:355px;">L</span>
<div style="left:894px;top:350px;width:50px;height:22px;background:#fff;"></div>
<div style="left:894px;top:350px;width:50px;height:1px;background:#808080;"></div>
<div style="left:894px;top:350px;width:1px;height:22px;background:#808080;"></div>
<div style="left:894px;top:371px;width:50px;height:1px;background:#fff;"></div>
<div style="left:943px;top:350px;width:1px;height:22px;background:#fff;"></div>
<div style="left:895px;top:351px;width:48px;height:1px;background:#404040;"></div>
<div style="left:895px;top:351px;width:1px;height:20px;background:#404040;"></div>
<div style="left:895px;top:370px;width:48px;height:1px;background:#d4d0c8;"></div>
<div style="left:942px;top:351px;width:1px;height:20px;background:#d4d0c8;"></div>
<div style="left:926px;top:352px;width:16px;height:18px;background:#d4d0c8;"></div>
<div style="left:926px;top:352px;width:16px;height:1px;background:#d4d0c8;"></div>
<div style="left:926px;top:352px;width:1px;height:18px;background:#d4d0c8;"></div>
<div style="left:926px;top:369px;width:16px;height:1px;background:#404040;"></div>
<div style="left:941px;top:352px;width:1px;height:18px;background:#404040;"></div>
<div style="left:927px;top:353px;width:14px;height:1px;background:#fff;"></div>
<div style="left:927px;top:353px;width:1px;height:16px;background:#fff;"></div>
<div style="left:927px;top:368px;width:14px;height:1px;background:#808080;"></div>
<div style="left:940px;top:353px;width:1px;height:16px;background:#808080;"></div>
<div style="left:930px;top:359px;width:7px;height:1px;background:#000;"></div>
<div style="left:931px;top:360px;width:5px;height:1px;background:#000;"></div>
<div style="left:932px;top:361px;width:3px;height:1px;background:#000;"></div>
<div style="left:933px;top:362px;width:1px;height:1px;background:#000;"></div>
<span class="cs" style="left:898px;top:355px;">1</span>
<div style="left:776px;top:379px;width:16px;height:8px;background:#888;"></div>
<div style="left:777px;top:380px;width:14px;height:6px;background:#fff;"></div>
<div style="left:871px;top:379px;width:16px;height:8px;background:#888;"></div>
<div style="left:872px;top:380px;width:14px;height:6px;background:#fff;"></div>
<div style="left:720px;top:372px;width:50px;height:22px;background:#fff;"></div>
<div style="left:720px;top:372px;width:50px;height:1px;background:#808080;"></div>
<div style="left:720px;top:372px;width:1px;height:22px;background:#808080;"></div>
<div style="left:720px;top:393px;width:50px;height:1px;background:#fff;"></div>
<div style="left:769px;top:372px;width:1px;height:22px;background:#fff;"></div>
<div style="left:721px;top:373px;width:48px;height:1px;background:#404040;"></div>
<div style="left:721px;top:373px;width:1px;height:20px;background:#404040;"></div>
<div style="left:721px;top:392px;width:48px;height:1px;background:#d4d0c8;"></div>
<div style="left:768px;top:373px;width:1px;height:20px;background:#d4d0c8;"></div>
<div style="left:752px;top:374px;width:16px;height:18px;background:#d4d0c8;"></div>
<div style="left:752px;top:374px;width:16px;height:1px;background:#d4d0c8;"></div>
<div style="left:752px;top:374px;width:1px;height:18px;background:#d4d0c8;"></div>
<div style="left:752px;top:391px;width:16px;height:1px;background:#404040;"></div>
<div style="left:767px;top:374px;width:1px;height:18px;background:#404040;"></div>
<div style="left:753px;top:375px;width:14px;height:1px;background:#fff;"></div>
<div style="left:753px;top:375px;width:1px;height:16px;background:#fff;"></div>
<div style="left:753px;top:390px;width:14px;height:1px;background:#808080;"></div>
<div style="left:766px;top:375px;width:1px;height:16px;background:#808080;"></div>
<div style="left:756px;top:381px;width:7px;height:1px;background:#000;"></div>
<div style="left:757px;top:382px;width:5px;height:1px;background:#000;"></div>
<div style="left:758px;top:383px;width:3px;height:1px;background:#000;"></div>
<div style="left:759px;top:384px;width:1px;height:1px;background:#000;"></div>
<span class="cs" style="left:724px;top:377px;transform:scaleX(0.8);">G</span>
<div style="left:894px;top:372px;width:50px;height:22px;background:#fff;"></div>
<div style="left:894px;top:372px;width:50px;height:1px;background:#808080;"></div>
<div style="left:894px;top:372px;width:1px;height:22px;background:#808080;"></div>
<div style="left:894px;top:393px;width:50px;height:1px;background:#fff;"></div>
<div style="left:943px;top:372px;width:1px;height:22px;background:#fff;"></div>
<div style="left:895px;top:373px;width:48px;height:1px;background:#404040;"></div>
<div style="left:895px;top:373px;width:1px;height:20px;background:#404040;"></div>
<div style="left:895px;top:392px;width:48px;height:1px;background:#d4d0c8;"></div>
<div style="left:942px;top:373px;width:1px;height:20px;background:#d4d0c8;"></div>
<div style="left:926px;top:374px;width:16px;height:18px;background:#d4d0c8;"></div>
<div style="left:926px;top:374px;width:16px;height:1px;background:#d4d0c8;"></div>
<div style="left:926px;top:374px;width:1px;height:18px;background:#d4d0c8;"></div>
<div style="left:926px;top:391px;width:16px;height:1px;background:#404040;"></div>
<div style="left:941px;top:374px;width:1px;height:18px;background:#404040;"></div>
<div style="left:927px;top:375px;width:14px;height:1px;background:#fff;"></div>
<div style="left:927px;top:375px;width:1px;height:16px;background:#fff;"></div>
<div style="left:927px;top:390px;width:14px;height:1px;background:#808080;"></div>
<div style="left:940px;top:375px;width:1px;height:16px;background:#808080;"></div>
<div style="left:930px;top:381px;width:7px;height:1px;background:#000;"></div>
<div style="left:931px;top:382px;width:5px;height:1px;background:#000;"></div>
<div style="left:932px;top:383px;width:3px;height:1px;background:#000;"></div>
<div style="left:933px;top:384px;width:1px;height:1px;background:#000;"></div>
<span class="cs" style="left:898px;top:377px;transform:scaleX(0.9);">Z</span>
<svg style="position:absolute;left:0;top:0" width="986" height="631" shape-rendering="crispEdges"><path fill="#000" d="M74 598h1v1h-1zM74 612h1v1h-1zM76 598h1v1h-1zM76 612h1v1h-1zM78 598h1v1h-1zM78 612h1v1h-1zM80 598h1v1h-1zM80 612h1v1h-1zM82 598h1v1h-1zM82 612h1v1h-1zM84 598h1v1h-1zM84 612h1v1h-1zM86 598h1v1h-1zM86 612h1v1h-1zM88 598h1v1h-1zM88 612h1v1h-1zM90 598h1v1h-1zM90 612h1v1h-1zM92 598h1v1h-1zM92 612h1v1h-1zM94 598h1v1h-1zM94 612h1v1h-1zM96 598h1v1h-1zM96 612h1v1h-1zM98 598h1v1h-1zM98 612h1v1h-1zM100 598h1v1h-1zM100 612h1v1h-1zM102 598h1v1h-1zM102 612h1v1h-1zM104 598h1v1h-1zM104 612h1v1h-1zM106 598h1v1h-1zM106 612h1v1h-1zM108 598h1v1h-1zM108 612h1v1h-1zM110 598h1v1h-1zM110 612h1v1h-1zM112 598h1v1h-1zM112 612h1v1h-1zM114 598h1v1h-1zM114 612h1v1h-1zM116 598h1v1h-1zM116 612h1v1h-1zM118 598h1v1h-1zM118 612h1v1h-1zM120 598h1v1h-1zM120 612h1v1h-1zM122 598h1v1h-1zM122 612h1v1h-1zM124 598h1v1h-1zM124 612h1v1h-1zM126 598h1v1h-1zM126 612h1v1h-1zM128 598h1v1h-1zM128 612h1v1h-1zM130 598h1v1h-1zM130 612h1v1h-1zM132 598h1v1h-1zM132 612h1v1h-1zM134 598h1v1h-1zM134 612h1v1h-1zM136 598h1v1h-1zM136 612h1v1h-1zM138 598h1v1h-1zM138 612h1v1h-1zM140 598h1v1h-1zM140 612h1v1h-1zM142 598h1v1h-1zM142 612h1v1h-1zM144 598h1v1h-1zM144 612h1v1h-1zM146 598h1v1h-1zM146 612h1v1h-1zM148 598h1v1h-1zM148 612h1v1h-1zM150 598h1v1h-1zM150 612h1v1h-1zM152 598h1v1h-1zM152 612h1v1h-1zM154 598h1v1h-1zM154 612h1v1h-1zM156 598h1v1h-1zM156 612h1v1h-1zM158 598h1v1h-1zM158 612h1v1h-1zM160 598h1v1h-1zM160 612h1v1h-1zM162 598h1v1h-1zM162 612h1v1h-1zM164 598h1v1h-1zM164 612h1v1h-1zM166 598h1v1h-1zM166 612h1v1h-1zM73 599h1v1h-1zM166 600h1v1h-1zM73 601h1v1h-1zM166 602h1v1h-1zM73 603h1v1h-1zM166 604h1v1h-1zM73 605h1v1h-1zM166 606h1v1h-1zM73 607h1v1h-1zM166 608h1v1h-1zM73 609h1v1h-1zM166 610h1v1h-1zM73 611h1v1h-1zM802 250h2v1h-2zM800 251h4v1h-4zM802 252h2v1h-2zM802 253h2v1h-2zM802 254h2v1h-2zM802 255h2v1h-2zM802 256h2v1h-2zM802 257h2v1h-2zM802 258h2v1h-2zM802 259h2v1h-2zM854 250h2v1h-2zM852 251h4v1h-4zM854 252h2v1h-2zM854 253h2v1h-2zM854 254h2v1h-2zM854 255h2v1h-2zM854 256h2v1h-2zM854 257h2v1h-2zM854 258h2v1h-2zM854 259h2v1h-2zM864 250h2v1h-2zM863 251h3v1h-3zM862 252h4v1h-4zM862 253h1v1h-1zM864 253h2v1h-2zM861 254h2v1h-2zM864 254h2v1h-2zM861 255h1v1h-1zM864 255h2v1h-2zM860 256h2v1h-2zM864 256h2v1h-2zM860 257h6v1h-6zM864 258h2v1h-2zM864 259h2v1h-2zM801 272h4v1h-4zM800 273h2v1h-2zM804 273h2v1h-2zM800 274h2v1h-2zM804 274h2v1h-2zM803 275h2v1h-2zM802 276h2v1h-2zM801 277h2v1h-2zM800 278h2v1h-2zM800 279h2v1h-2zM800 280h6v1h-6zM800 281h6v1h-6zM854 272h2v1h-2zM852 273h4v1h-4zM854 274h2v1h-2zM854 275h2v1h-2zM854 276h2v1h-2zM854 277h2v1h-2zM854 278h2v1h-2zM854 279h2v1h-2zM854 280h2v1h-2zM854 281h2v1h-2zM861 272h4v1h-4zM860 273h2v1h-2zM864 273h2v1h-2zM864 274h2v1h-2zM864 275h2v1h-2zM862 276h3v1h-3zM864 277h2v1h-2zM864 278h2v1h-2zM864 279h2v1h-2zM860 280h2v1h-2zM864 280h2v1h-2zM861 281h4v1h-4zM801 294h4v1h-4zM800 295h2v1h-2zM804 295h2v1h-2zM804 296h2v1h-2zM804 297h2v1h-2zM802 298h3v1h-3zM804 299h2v1h-2zM804 300h2v1h-2zM804 301h2v1h-2zM800 302h2v1h-2zM804 302h2v1h-2zM801 303h4v1h-4zM854 294h2v1h-2zM852 295h4v1h-4zM854 296h2v1h-2zM854 297h2v1h-2zM854 298h2v1h-2zM854 299h2v1h-2zM854 300h2v1h-2zM854 301h2v1h-2zM854 302h2v1h-2zM854 303h2v1h-2zM861 294h4v1h-4zM860 295h2v1h-2zM864 295h2v1h-2zM860 296h2v1h-2zM864 296h2v1h-2zM863 297h2v1h-2zM862 298h2v1h-2zM861 299h2v1h-2zM860 300h2v1h-2zM860 301h2v1h-2zM860 302h6v1h-6zM860 303h6v1h-6zM804 316h2v1h-2zM803 317h3v1h-3zM802 318h4v1h-4zM802 319h1v1h-1zM804 319h2v1h-2zM801 320h2v1h-2zM804 320h2v1h-2zM801 321h1v1h-1zM804 321h2v1h-2zM800 322h2v1h-2zM804 322h2v1h-2zM800 323h6v1h-6zM804 324h2v1h-2zM804 325h2v1h-2zM854 316h2v1h-2zM852 317h4v1h-4zM854 318h2v1h-2zM854 319h2v1h-2zM854 320h2v1h-2zM854 321h2v1h-2zM854 322h2v1h-2zM854 323h2v1h-2zM854 324h2v1h-2zM854 325h2v1h-2zM862 316h2v1h-2zM860 317h4v1h-4zM862 318h2v1h-2zM862 319h2v1h-2zM862 320h2v1h-2zM862 321h2v1h-2zM862 322h2v1h-2zM862 323h2v1h-2zM862 324h2v1h-2zM862 325h2v1h-2zM800 338h6v1h-6zM800 339h2v1h-2zM800 340h2v1h-2zM800 341h2v1h-2zM800 342h5v1h-5zM800 343h2v1h-2zM804 343h2v1h-2zM804 344h2v1h-2zM804 345h2v1h-2zM800 346h2v1h-2zM804 346h2v1h-2zM801 347h4v1h-4zM854 338h2v1h-2zM852 339h4v1h-4zM854 340h2v1h-2zM854 341h2v1h-2zM854 342h2v1h-2zM854 343h2v1h-2zM854 344h2v1h-2zM854 345h2v1h-2zM854 346h2v1h-2zM854 347h2v1h-2zM861 338h4v1h-4zM860 339h2v1h-2zM864 339h2v1h-2zM860 340h2v1h-2zM864 340h2v1h-2zM860 341h2v1h-2zM864 341h2v1h-2zM860 342h2v1h-2zM864 342h2v1h-2zM860 343h2v1h-2zM864 343h2v1h-2zM860 344h2v1h-2zM864 344h2v1h-2zM860 345h2v1h-2zM864 345h2v1h-2zM860 346h2v1h-2zM864 346h2v1h-2zM861 347h4v1h-4zM801 360h4v1h-4zM800 361h2v1h-2zM804 361h2v1h-2zM800 362h2v1h-2zM800 363h2v1h-2zM800 364h5v1h-5zM800 365h2v1h-2zM804 365h2v1h-2zM800 366h2v1h-2zM804 366h2v1h-2zM800 367h2v1h-2zM804 367h2v1h-2zM800 368h2v1h-2zM804 368h2v1h-2zM801 369h4v1h-4zM859 360h4v1h-4zM858 361h2v1h-2zM862 361h2v1h-2zM858 362h2v1h-2zM862 362h2v1h-2zM858 363h2v1h-2zM862 363h2v1h-2zM858 364h2v1h-2zM862 364h2v1h-2zM859 365h5v1h-5zM862 366h2v1h-2zM862 367h2v1h-2zM858 368h2v1h-2zM862 368h2v1h-2zM859 369h4v1h-4zM800 382h6v1h-6zM804 383h2v1h-2zM803 384h2v1h-2zM803 385h2v1h-2zM802 386h2v1h-2zM802 387h2v1h-2zM802 388h2v1h-2zM801 389h2v1h-2zM801 390h2v1h-2zM801 391h2v1h-2zM859 382h4v1h-4zM858 383h2v1h-2zM862 383h2v1h-2zM858 384h2v1h-2zM862 384h2v1h-2zM858 385h2v1h-2zM862 385h2v1h-2zM859 386h4v1h-4zM858 387h2v1h-2zM862 387h2v1h-2zM858 388h2v1h-2zM862 388h2v1h-2zM858 389h2v1h-2zM862 389h2v1h-2zM858 390h2v1h-2zM862 390h2v1h-2zM859 391h4v1h-4z"/></svg>
</body></html>
